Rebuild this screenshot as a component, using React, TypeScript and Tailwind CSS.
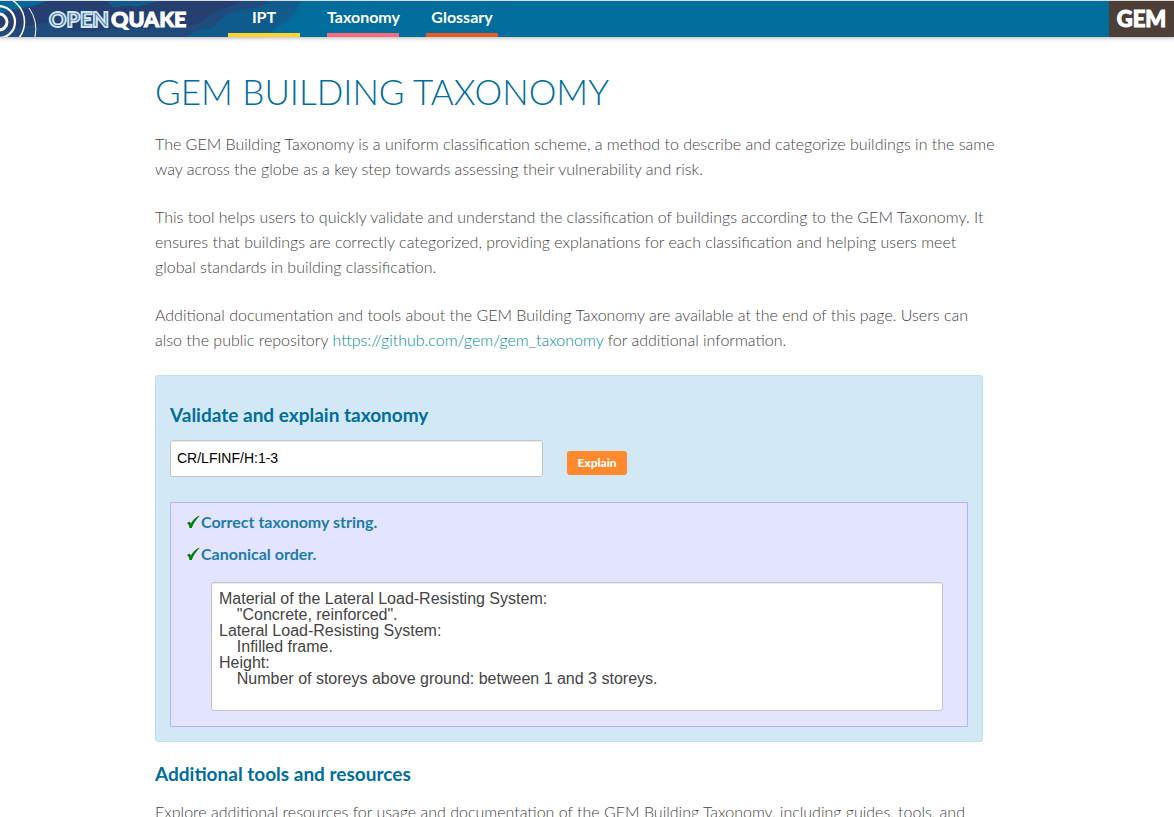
import type { ReactNode } from "react";

const navItems = [
  { label: "IPT", bar: "border-[#ffd42e]" },
  { label: "Taxonomy", bar: "border-[#f76c7c]" },
  { label: "Glossary", bar: "border-[#e85a24]" },
];

const explanation = `Material of the Lateral Load-Resisting System:
    "Concrete, reinforced".
Lateral Load-Resisting System:
    Infilled frame.
Height:
    Number of storeys above ground: between 1 and 3 storeys.`;

function Logo() {
  return (
    <a href="#home" aria-label="OpenQuake" className="block h-9 w-[300px] shrink-0">
      <svg viewBox="0 0 300 36" className="h-9 w-[300px]">
        <rect width="300" height="36" fill="#006d9c" />
        <path d="M0 0H300C297 14 286 22 274 28L266 36H0Z" fill="#0f5c8c" />
        <path d="M0 0H270C260 8 240 8 230 12C215 18 222 26 205 28C195 30 190 32 188 36H0Z" fill="#1f4c7d" />
        <path d="M46 0H240C230 8 214 8 207 16C202 24 190 22 184 28C170 20 158 24 148 29C130 24 112 28 96 30C70 32 60 24 44 22L0 30V12Z" fill="#253f71" />
        <path d="M108 0H158C150 3 142 4 136 6C126 3 116 9 110 4Z" fill="#125a8a" />
        <path d="M0 0H46C34 7 18 6 0 13Z" fill="#04699a" />
        <g fill="none" stroke="#fff">
          <circle cx="-1" cy="21" r="8" strokeWidth="3" />
          <circle cx="-1" cy="21" r="16" strokeWidth="2.2" />
          <circle cx="-1" cy="21" r="25.500" strokeWidth="1.500" />
          <path d="M29 7A37 37 0 0 1 35 36" strokeWidth="1" />
        </g>
        <g fontFamily="Lato, sans-serif" fontWeight="900" fontSize="21.500">
          <text x="49" y="26" fill="#3b628d" stroke="#cfe6f2" strokeWidth="1.800">OPEN</text>
          <text x="111" y="26" fill="#fff" stroke="#fff" strokeWidth="1">QUAKE</text>
        </g>
      </svg>
    </a>
  );
}

function Check({ children }: { children: ReactNode }) {
  return (
    <p className="flex items-center text-base leading-8 font-bold text-[#217ca3]">
      <svg viewBox="0 0 15 16" aria-hidden="true" className="h-4 w-[15px]">
        <path d="M1 9.200C2.500 7 4.200 7.200 4.900 9.600C7 6 9.500 2.800 14 1.400C10 5.500 7.500 9 5.800 14H3.500C3.200 11.500 2.600 9.800 1 9.200Z" fill="#008000" />
      </svg>
      {children}
    </p>
  );
}

export default function App() {
  return (
    <div className="h-screen overflow-hidden bg-white font-['Lato',sans-serif] text-base text-[#444]">
      <header className="flex h-[37px] border-t border-[#dedede] bg-[#006d9c] shadow-[0_1px_4px_rgba(0,0,0,0.3)]">
        <div className="-mr-[72px]">
          <Logo />
        </div>
        <nav className="relative flex grow gap-[27px]">
          {navItems.map((item) => (
            <a
              key={item.label}
              href={"#" + item.label.toLowerCase()}
              className={"h-9 w-[72px] border-b-4 text-center leading-8 font-bold whitespace-nowrap text-white " + item.bar}
            >
              {item.label}
            </a>
          ))}
        </nav>
        <a
          href="#gem"
          className="w-[65px] bg-[#4d3e38] text-center text-[22px] leading-9 font-black text-white [-webkit-text-stroke:1px_white]"
        >
          GEM
        </a>
      </header>

      <main className="mx-auto max-w-[864px] pr-9">
        <h1 className="pt-[30px] text-[35px] leading-[48px] font-light text-[#006d9c]">GEM BUILDING TAXONOMY</h1>
        <div className="-mr-6 mt-4 flex flex-col gap-[23px] leading-[25px] font-light">
          <p>
            The GEM Building Taxonomy is a uniform classification scheme, a method to describe and categorize buildings in the same
            <br />
            way across the globe as a key step towards assessing their vulnerability and risk.
          </p>
          <p>
            This tool helps users to quickly validate and understand the classification of buildings according to the GEM Taxonomy. It
            <br />
            ensures that buildings are correctly categorized, providing explanations for each classification and helping users meet
            <br />
            global standards in building classification.
          </p>
          <p>
            Additional documentation and tools about the GEM Building Taxonomy are available at the end of this page. Users can
            <br />
            also the public repository{" "}
            <a href="https://github.com/gem/gem_taxonomy" className="text-[#008c98]">
              https://github.com/gem/gem_taxonomy
            </a>{" "}
            for additional information.
          </p>
        </div>

        <section className="mt-[23px] rounded-[3px] border border-[#b3e3ee] bg-[#d2e9f5] p-[14px]">
          <form onSubmit={(event) => event.preventDefault()}>
            <label htmlFor="taxonomy" className="mt-2 block text-[19px] leading-[34px] font-bold text-[#006d9c]">
              Validate and explain taxonomy
            </label>
            <div className="mt-2 flex items-end gap-6">
              <input
                id="taxonomy"
                type="text"
                defaultValue="CR/LFINF/H:1-3"
                className="h-[37px] w-[373px] rounded-[3px] border border-[#c4c4c4] bg-white px-1.5 pb-0.5 font-['Liberation_Sans',sans-serif] text-sm text-black shadow-[inset_0_1px_1px_rgba(0,0,0,0.08)]"
              />
              <button type="submit" className="mb-0.5 h-6 w-15 rounded-[3px] bg-[#ff892c] text-xs font-black text-white">
                Explain
              </button>
            </div>
          </form>
          <div className="mt-[25px] border border-[#b4b4fa] bg-[#e3e4ff] px-[15px] pt-[3px] pb-[15px]">
            <Check>Correct taxonomy string.</Check>
            <Check>Canonical order.</Check>
            <textarea
              readOnly
              aria-label="Explanation"
              value={explanation}
              className="mt-3 ml-[25px] block h-[129px] w-[calc(100%-34px)] resize-none rounded-[3px] border border-[#c4c4c4] bg-white px-[7px] py-2 font-['Liberation_Sans',sans-serif] text-base leading-4 text-[#444] shadow-[inset_0_1px_1px_rgba(0,0,0,0.08)]"
            />
          </div>
        </section>

        <h2 className="mt-[15px] text-[19px] leading-[34px] font-bold text-[#006d9c]">Additional tools and resources</h2>
        <p className="mt-2 leading-[25px] font-light">
          Explore additional resources for usage and documentation of the GEM Building Taxonomy, including guides, tools, and
        </p>
      </main>
    </div>
  );
}
